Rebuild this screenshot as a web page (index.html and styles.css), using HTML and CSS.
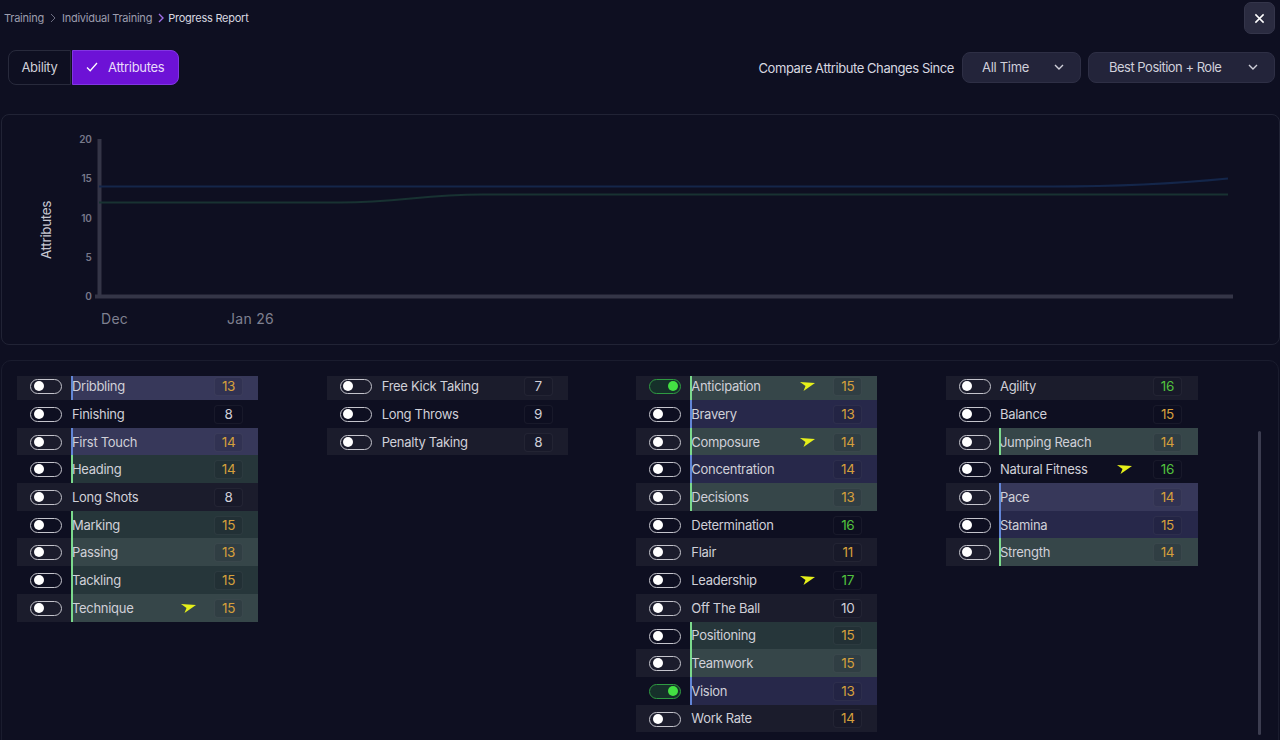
FILE: index.html
```html
<!DOCTYPE html>
<html lang="en">
<head>
    <meta charset="UTF-8">
    <title>Progress Report</title>
    <link rel="stylesheet" href="styles.css">
</head>
<body>
    <!-- Breadcrumb + close -->
    <div class="topbar">
        <div class="crumbs">
            <span>Training</span>
            <svg class="crumb-sep" viewBox="0 0 6 10"><path d="M1 1l4 4-4 4"/></svg>
            <span>Individual Training</span>
            <svg class="crumb-sep crumb-sep-on" viewBox="0 0 6 10"><path d="M1 1l4 4-4 4"/></svg>
            <span class="crumb-current">Progress Report</span>
        </div>
        <button class="close-btn">
            <svg viewBox="0 0 12 12"><path d="M1.5 1.5l9 9M10.5 1.5l-9 9"/></svg>
        </button>
    </div>

    <!-- Tabs + filters -->
    <div class="controls">
        <div class="tabs">
            <button class="tab">Ability</button>
            <button class="tab tab-on">
                <svg viewBox="0 0 12 10"><path d="M1 5.5l3.2 3.2L11 1"/></svg>
                Attributes
            </button>
        </div>
        <div class="filters">
            <span class="filter-label">Compare Attribute Changes Since</span>
            <button class="select select-time">All Time
                <svg viewBox="0 0 10 6"><path d="M1 1l4 4 4-4"/></svg>
            </button>
            <button class="select select-role">Best Position + Role
                <svg viewBox="0 0 10 6"><path d="M1 1l4 4 4-4"/></svg>
            </button>
        </div>
    </div>

    <!-- Chart -->
    <div class="chart-card">
        <svg class="chart" viewBox="0 0 1278 229">
            <text class="axis-title" transform="translate(49 115) rotate(-90)">Attributes</text>
            <text class="tick" x="89.500" y="27.500">20</text>
            <text class="tick" x="89.500" y="67">15</text>
            <text class="tick" x="89.500" y="106.500">10</text>
            <text class="tick" x="89.500" y="146">5</text>
            <text class="tick" x="89.500" y="185">0</text>
            <path class="axis" d="M97.5 24V183M93 181.5H1231"/>
            <path class="line-blue" d="M97 71.500H1050C1110 71.500 1170 69 1226 63.500"/>
            <path class="line-green" d="M97 87.500H338C398 87.500 420 79.500 480 79.500H1226"/>
            <text class="month" x="99" y="209">Dec</text>
            <text class="month" x="225" y="209">Jan 26</text>
        </svg>
    </div>

    <!-- Attribute lists -->
    <div class="list-card">
        <div class="columns">
            <div class="column">
                <div class="row row-blue"><span class="toggle"></span><span class="name">Dribbling</span><span class="val val-mid">13</span></div>
                <div class="row"><span class="toggle"></span><span class="name">Finishing</span><span class="val">8</span></div>
                <div class="row row-blue"><span class="toggle"></span><span class="name">First Touch</span><span class="val val-mid">14</span></div>
                <div class="row row-green"><span class="toggle"></span><span class="name">Heading</span><span class="val val-mid">14</span></div>
                <div class="row"><span class="toggle"></span><span class="name">Long Shots</span><span class="val">8</span></div>
                <div class="row row-green"><span class="toggle"></span><span class="name">Marking</span><span class="val val-mid">15</span></div>
                <div class="row row-green"><span class="toggle"></span><span class="name">Passing</span><span class="val val-mid">13</span></div>
                <div class="row row-green"><span class="toggle"></span><span class="name">Tackling</span><span class="val val-mid">15</span></div>
                <div class="row row-green"><span class="toggle"></span><span class="name">Technique</span><svg class="arrow" viewBox="0 0 15 9"><path d="M0 0L15 1 3.500 9 5.500 4z"/></svg><span class="val val-mid">15</span></div>
            </div>
            <div class="column">
                <div class="row"><span class="toggle"></span><span class="name">Free Kick Taking</span><span class="val">7</span></div>
                <div class="row"><span class="toggle"></span><span class="name">Long Throws</span><span class="val">9</span></div>
                <div class="row"><span class="toggle"></span><span class="name">Penalty Taking</span><span class="val">8</span></div>
            </div>
            <div class="column">
                <div class="row row-green"><span class="toggle toggle-on"></span><span class="name">Anticipation</span><svg class="arrow" viewBox="0 0 15 9"><path d="M0 0L15 1 3.500 9 5.500 4z"/></svg><span class="val val-mid">15</span></div>
                <div class="row row-blue"><span class="toggle"></span><span class="name">Bravery</span><span class="val val-mid">13</span></div>
                <div class="row row-green"><span class="toggle"></span><span class="name">Composure</span><svg class="arrow" viewBox="0 0 15 9"><path d="M0 0L15 1 3.500 9 5.500 4z"/></svg><span class="val val-mid">14</span></div>
                <div class="row row-blue"><span class="toggle"></span><span class="name">Concentration</span><span class="val val-mid">14</span></div>
                <div class="row row-green"><span class="toggle"></span><span class="name">Decisions</span><span class="val val-mid">13</span></div>
                <div class="row"><span class="toggle"></span><span class="name">Determination</span><span class="val val-high">16</span></div>
                <div class="row"><span class="toggle"></span><span class="name">Flair</span><span class="val val-mid">11</span></div>
                <div class="row"><span class="toggle"></span><span class="name">Leadership</span><svg class="arrow" viewBox="0 0 15 9"><path d="M0 0L15 1 3.500 9 5.500 4z"/></svg><span class="val val-high">17</span></div>
                <div class="row"><span class="toggle"></span><span class="name">Off The Ball</span><span class="val">10</span></div>
                <div class="row row-green"><span class="toggle"></span><span class="name">Positioning</span><span class="val val-mid">15</span></div>
                <div class="row row-green"><span class="toggle"></span><span class="name">Teamwork</span><span class="val val-mid">15</span></div>
                <div class="row row-blue"><span class="toggle toggle-on"></span><span class="name">Vision</span><span class="val val-mid">13</span></div>
                <div class="row"><span class="toggle"></span><span class="name">Work Rate</span><span class="val val-mid">14</span></div>
            </div>
            <div class="column column-wide">
                <div class="row"><span class="toggle"></span><span class="name">Agility</span><span class="val val-high">16</span></div>
                <div class="row"><span class="toggle"></span><span class="name">Balance</span><span class="val val-mid">15</span></div>
                <div class="row row-green"><span class="toggle"></span><span class="name">Jumping Reach</span><span class="val val-mid">14</span></div>
                <div class="row"><span class="toggle"></span><span class="name">Natural Fitness</span><svg class="arrow arrow-far" viewBox="0 0 15 9"><path d="M0 0L15 1 3.500 9 5.500 4z"/></svg><span class="val val-high">16</span></div>
                <div class="row row-blue"><span class="toggle"></span><span class="name">Pace</span><span class="val val-mid">14</span></div>
                <div class="row row-blue"><span class="toggle"></span><span class="name">Stamina</span><span class="val val-mid">15</span></div>
                <div class="row row-green"><span class="toggle"></span><span class="name">Strength</span><span class="val val-mid">14</span></div>
            </div>
        </div>
        <div class="scroll-thumb"></div>
    </div>
</body>
</html>
```

FILE: styles.css
```css
* {
    box-sizing: border-box;
    margin: 0;
    padding: 0;
}
html, body {
    height: 100%;
    overflow: hidden;
}
body {
    font-family: Inter, "Noto Sans", sans-serif;
    font-size: 13px;
    letter-spacing: -0.3px;
    color: #d0d0d8;
    background-color: #0e0f21;
}
button {
    font-family: inherit;
    font-size: 13px;
    letter-spacing: inherit;
    color: inherit;
    cursor: pointer;
}
svg path {
    fill: none;
    stroke: currentColor;
}

/* top bar */
.topbar {
    display: flex;
    justify-content: space-between;
    align-items: flex-start;
    height: 50px;
    padding: 2px 5px 0 4px;
}
.crumbs {
    display: flex;
    align-items: center;
    gap: 6px;
    height: 31px;
    font-size: 11px;
    letter-spacing: -0.24px;
    color: #9c9dae;
}
.crumb-sep {
    width: 6px;
    height: 10px;
    color: #6c6d80;
}
.crumb-sep-on {
    margin-right: -2px;
    color: #a070e8;
    stroke-width: 1.4;
}
.crumb-current {
    color: #d8d8e0;
}
.close-btn {
    display: flex;
    align-items: center;
    justify-content: center;
    width: 31px;
    height: 32px;
    background: #2a2b40;
    border: 1px solid #34354a;
    border-radius: 7px;
    color: #fff;
}
.close-btn svg {
    width: 11px;
    height: 11px;
    stroke-width: 1.6;
}

/* tabs + filters */
.controls {
    display: flex;
    justify-content: space-between;
    align-items: center;
    height: 35px;
    padding: 0 5px 0 8px;
}
.tabs {
    display: flex;
    gap: 1px;
}
.tab {
    height: 35px;
    width: 63px;
    padding-bottom: 1px;
    background: transparent;
    border: 1px solid #282a3c;
    border-radius: 8px 0 0 8px;
}
.tab-on {
    display: flex;
    align-items: center;
    gap: 10px;
    width: 107px;
    padding-left: 13px;
    background: #6d12d6;
    border-color: #8236e2;
    border-radius: 0 8px 8px 0;
    color: #e8dcfa;
}
.tab-on svg {
    width: 12px;
    height: 10px;
    color: #fff;
    stroke-width: 1.3;
}
.filters {
    display: flex;
    align-items: center;
}
.filter-label {
    margin-right: 8px;
    letter-spacing: -0.42px;
    color: #d8d8e0;
}
.select {
    display: flex;
    align-items: center;
    justify-content: space-between;
    height: 31px;
    padding-bottom: 1px;
    background: #23243a;
    border: 1px solid #2e2f45;
    border-radius: 8px;
    color: #d0d0da;
}
.select svg {
    width: 10px;
    height: 6px;
    stroke-width: 1.4;
}
.select-time {
    width: 119px;
    padding-left: 19px;
    padding-right: 16px;
    margin-right: 7px;
}
.select-role {
    width: 187px;
    padding-left: 20px;
    padding-right: 16px;
    letter-spacing: -0.5px;
}

/* chart */
.chart-card {
    height: 231px;
    margin: 29px 0 0 1px;
    border: 1px solid #212335;
    border-radius: 8px;
}
.chart {
    display: block;
    width: 1278px;
    height: 229px;
}
.axis-title {
    font-size: 13.400px;
    fill: #c8c8d2;
    text-anchor: middle;
}
.tick {
    font-size: 10px;
    font-weight: 600;
    fill: #77788a;
    text-anchor: end;
}
.month {
    font-size: 14px;
    letter-spacing: 0.3px;
    fill: #7f8090;
}
svg path.axis {
    stroke: #343547;
    stroke-width: 4;
}
svg path.line-blue {
    stroke: #14264a;
    stroke-width: 2;
}
svg path.line-green {
    stroke: #183232;
    stroke-width: 2;
}

/* attribute lists */
.list-card {
    position: relative;
    height: 400px;
    margin: 15px 1px 0 1px;
    padding: 15px 0 0 15px;
    border: 1px solid #1a1c2e;
    border-radius: 10px 10px 0 0;
}
.columns {
    display: grid;
    grid-template-columns: 241px 241px 241px 252px;
    column-gap: 68.670px;
    align-items: start;
    overflow: hidden;
    height: 380px;
}
.column {
    margin-top: -3.700px;
}
.row {
    position: relative;
    display: flex;
    align-items: center;
    height: 27.700px;
    padding-left: 55px;
}
.row:nth-child(odd) {
    background: #1b1c2c;
}
.row-blue::before, .row-green::before {
    content: "";
    position: absolute;
    left: 54px;
    top: 0;
    right: 0;
    bottom: 0;
    border-left: 2px solid;
}
.row-blue::before {
    background: #27284a;
    border-color: #6285d6;
}
.row-green::before {
    background: #26363a;
    border-color: #7bd98c;
}
.row-blue:nth-child(odd)::before {
    background: #37385a;
}
.row-green:nth-child(odd)::before {
    background: #364649;
}
.toggle {
    position: absolute;
    left: 13px;
    top: 7px;
    width: 32px;
    height: 15px;
    border: 1.500px solid #c4c4cc;
    border-radius: 8px;
}
.toggle::after {
    content: "";
    position: absolute;
    left: 2.500px;
    top: 1px;
    width: 10px;
    height: 10px;
    border-radius: 50%;
    background: #fff;
}
.toggle-on {
    border-color: #2f9a42;
    background: #16302a;
}
.toggle-on::after {
    left: auto;
    right: 2.500px;
    background: #43e043;
}
.name {
    position: relative;
    flex: 1;
}
.arrow {
    position: absolute;
    left: 164px;
    top: 10px;
    width: 15px;
    height: 9px;
}
.arrow-far {
    left: 171px;
}
.arrow path {
    fill: #e6f01a;
    stroke: none;
}
.val {
    position: relative;
    top: 0.500px;
    width: 29px;
    height: 19px;
    margin-right: 15px;
    font-size: 13.500px;
    line-height: 17px;
    text-align: center;
    background: rgba(8, 9, 22, 0.12);
    border: 1px solid rgba(255, 255, 255, 0.05);
    border-radius: 4px;
}
.val-mid {
    color: #d6a03c;
}
.val-high {
    color: #52c23e;
}
.column-wide .row {
    padding-left: 54px;
}
.column-wide .row-blue::before, .column-wide .row-green::before {
    left: 53px;
}
.column-wide .val {
    margin-right: 16px;
}
.scroll-thumb {
    position: absolute;
    right: 17px;
    top: 70px;
    bottom: 24px;
    width: 3px;
    border-radius: 2px;
    background: #3c3d50;
}
```
